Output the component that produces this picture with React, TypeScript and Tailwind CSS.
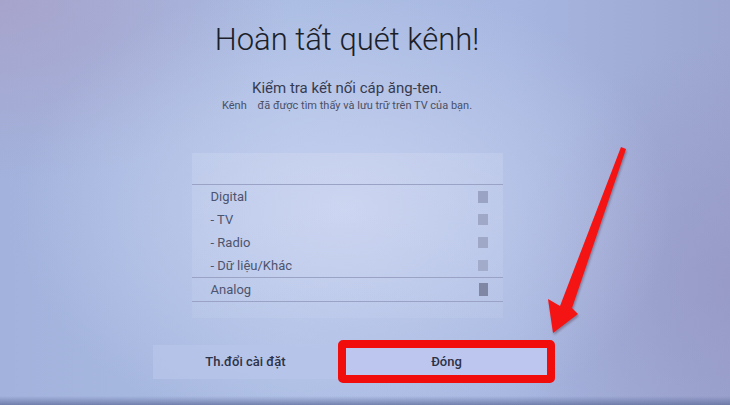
import React from 'react'

const rows = [
  { label: 'Digital', square: 'h-[12px] w-[10px] bg-[#9ba3c4]' },
  { label: '- TV', square: 'h-[11px] w-[10px] bg-[#a0a8c8]' },
  { label: '- Radio', square: 'h-[11px] w-[10px] bg-[#a0a8c8]' },
  { label: '- Dữ liệu/Khác', square: 'h-[11px] w-[10px] bg-[#a3abcb]' },
]

export default function App() {
  return (
    <div
      className="relative h-[405px] w-[730px] overflow-hidden bg-[linear-gradient(to_top,rgba(96,110,156,0.75)_0px,rgba(96,110,156,0)_9px),radial-gradient(ellipse_45%_58%_at_47%_52%,rgba(200,210,240,0.95),rgba(200,210,240,0)_100%),radial-gradient(ellipse_40%_45%_at_0%_0%,rgba(168,160,200,0.8),rgba(168,160,200,0)_100%),radial-gradient(ellipse_30%_60%_at_100%_70%,rgba(150,150,196,0.7),rgba(150,150,196,0)_100%),linear-gradient(to_right,#a2b2dc_0%,#aabce3_40%,#a6b6e0_70%,#9ca6d0_100%)] font-['Roboto',sans-serif]"
    >
      <div className="flex flex-col items-center pr-[36px]">
        <h1 className="pt-[22px] text-[31px] font-light leading-[36px] text-[#1c1f29]">
          Hoàn tất quét kênh!
        </h1>
        <p className="mt-[21px] text-[15px] leading-[18px] text-[#363b4f]">
          Kiểm tra kết nối cáp ăng-ten.
        </p>
        <p className="mt-[2px] whitespace-pre text-[11px] leading-[14px] text-[#4a5066]">
          {'Kênh    đã được tìm thấy và lưu trữ trên TV của bạn.'}
        </p>

        <div className="mt-[40px] w-[311px] bg-[linear-gradient(to_bottom,rgba(255,255,255,0.12),rgba(255,255,255,0.06))] pt-[31px] pb-[16px]">
          <div className="border-t border-[#9aa3c6]">
            {rows.map((row) => (
              <div
                key={row.label}
                className="flex h-[23px] items-center justify-between pl-[19px] pr-[15px] text-[13px] text-[#4d546e]"
              >
                <span>{row.label}</span>
                <span className={row.square} />
              </div>
            ))}
          </div>
          <div className="border-y border-[#9aa3c6]">
            <div className="flex h-[23px] items-center justify-between pl-[19px] pr-[15px] text-[13px] text-[#4d546e]">
              <span>Analog</span>
              <span className="h-[13px] w-[9px] bg-[#7f87a5]" />
            </div>
          </div>
        </div>

        <div className="mt-[22px] ml-[14px] flex items-center">
          <button
            type="button"
            className="flex h-[34px] w-[185px] items-center justify-center bg-[#b8c4ea]/80 text-[13px] font-medium text-[#2d3247]"
          >
            Th.đổi cài đặt
          </button>
          <button
            type="button"
            className="flex h-[43px] w-[217px] items-center justify-center rounded-[5px] border-[8px] border-[#f20d0d] bg-[#bcc6ee] text-[13px] font-medium text-[#2d3247]"
          >
            Đóng
          </button>
        </div>
      </div>

      <svg
        className="pointer-events-none absolute inset-0 drop-shadow-[1px_2px_1px_rgba(60,20,40,0.35)]"
        width="730"
        height="405"
        viewBox="0 0 730 405"
      >
        <polygon
          points="621,147 626,149 572,308 578,314 553,333 548,299 560,306"
          fill="#f41414"
        />
      </svg>
    </div>
  )
}
